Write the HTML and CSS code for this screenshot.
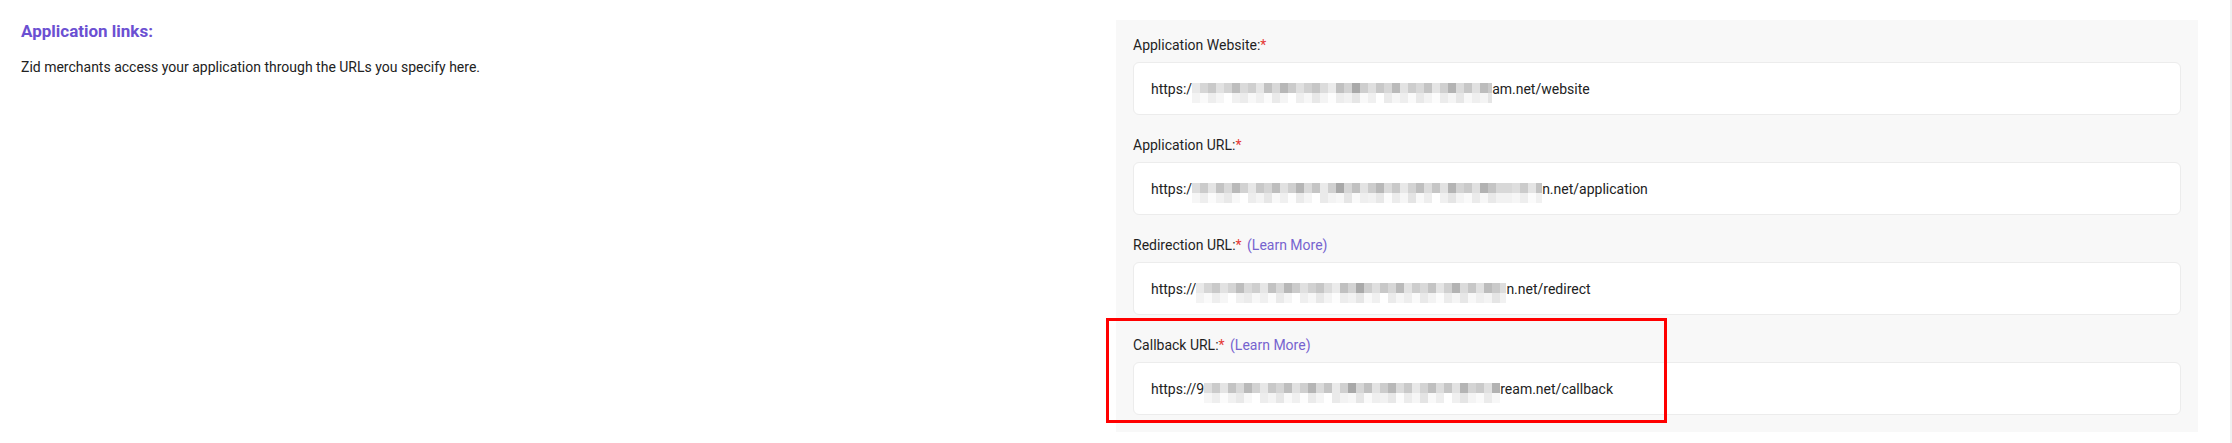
FILE: index.html
```html
<!DOCTYPE html>
<html lang="en">
<head>
    <meta charset="UTF-8">
    <meta name="viewport" content="width=device-width, initial-scale=1.0">
    <title>Application links</title>
    <link rel="stylesheet" href="styles.css">
</head>
<body>

    <div class="page">
        <!-- Section intro -->
        <div class="intro">
            <h2 class="section-title">Application links:</h2>
            <p class="section-desc">Zid merchants access your application through the URLs you specify here.</p>
        </div>

        <!-- URL fields -->
        <div class="panel">
            <div class="field">
                <label class="field-label">Application Website:<span class="req">*</span></label>
                <div class="field-input">https:/<span class="mosaic mosaic-a" style="width: 300px;"></span>am.net/website</div>
            </div>

            <div class="field">
                <label class="field-label">Application URL:<span class="req">*</span></label>
                <div class="field-input">https:/<span class="mosaic mosaic-b" style="width: 350px;"></span>n.net/application</div>
            </div>

            <div class="field">
                <label class="field-label">Redirection URL:<span class="req">*</span> <a href="#" class="learn-more">(Learn More)</a></label>
                <div class="field-input">https://<span class="mosaic mosaic-a" style="width: 310px;"></span>n.net/redirect</div>
            </div>

            <div class="field">
                <span class="highlight"></span>
                <label class="field-label">Callback URL:<span class="req">*</span> <a href="#" class="learn-more">(Learn More)</a></label>
                <div class="field-input">https://9<span class="mosaic mosaic-b" style="width: 296px;"></span>ream.net/callback</div>
            </div>
        </div>
    </div>

</body>
</html>
```

FILE: styles.css
```css
* {
    margin: 0;
    padding: 0;
    box-sizing: border-box;
}

body {
    font-family: Roboto, "Noto Sans", Arial, sans-serif;
    background-color: #ffffff;
    color: #1f1f1f;
}

.page {
    display: grid;
    grid-template-columns: 1fr 1082px;
    min-height: 443px;
    padding: 20px 32px 0 21px;
    border-right: 2px solid #f0f0f0;
}

.section-title {
    font-size: 17px;
    line-height: 22px;
    font-weight: 700;
    color: #6b50d2;
    margin-bottom: 15px;
}

.section-desc {
    font-size: 14px;
    line-height: 20px;
    color: #222222;
}

.panel {
    align-self: start;
    background-color: #f8f8f8;
    padding: 15px 17px 17px;
}

.field {
    position: relative;
    margin-bottom: 20px;
}

.field:last-child {
    margin-bottom: 0;
}

.field-label {
    display: block;
    font-size: 14px;
    line-height: 20px;
    color: #1f1f1f;
    margin-bottom: 7px;
}

.req {
    color: #e53935;
}

.learn-more {
    color: #7663cf;
    text-decoration: none;
    margin-left: 2px;
}

.field-input {
    display: flex;
    align-items: center;
    height: 53px;
    padding: 0 17px;
    background-color: #ffffff;
    border: 1px solid #ececec;
    border-radius: 6px;
    font-size: 14px;
    color: #222222;
    white-space: nowrap;
}

/* pixelated (blurred) part of the url */
.mosaic {
    display: inline-block;
    height: 20px;
    margin-top: 9px;
    flex-shrink: 0;
    background-repeat: repeat-x;
    background-size: 320px 10px, 320px 10px;
    background-position: left top, left bottom;
}

.mosaic-a {
    background-image:
        linear-gradient(90deg, #e9e9e9 0 8px, #d6d6d6 8px 16px, #c9c9c9 16px 24px, #e2e2e2 24px 32px, #d4d4d4 32px 40px, #bdbdbd 40px 48px, #dadada 48px 56px, #cfcfcf 56px 64px, #e6e6e6 64px 72px, #c2c2c2 72px 80px, #d8d8d8 80px 88px, #b7b7b7 88px 96px, #cbcbcb 96px 104px, #e0e0e0 104px 112px, #d1d1d1 112px 120px, #c6c6c6 120px 128px, #dcdcdc 128px 136px, #ebebeb 136px 144px, #c0c0c0 144px 152px, #d3d3d3 152px 160px, #a9a9a9 160px 168px, #cecece 168px 176px, #dfdfdf 176px 184px, #c8c8c8 184px 192px, #d7d7d7 192px 200px, #bababa 200px 208px, #e3e3e3 208px 216px, #cdcdcd 216px 224px, #d9d9d9 224px 232px, #c4c4c4 232px 240px, #e5e5e5 240px 248px, #d0d0d0 248px 256px, #b3b3b3 256px 264px, #dbdbdb 264px 272px, #c7c7c7 272px 280px, #e1e1e1 280px 288px, #bcbcbc 288px 296px, #cacaca 296px 304px, #dddddd 304px 320px),
        linear-gradient(90deg, #f3f3f3 0 8px, #fafafa 8px 16px, #eeeeee 16px 24px, #f6f6f6 24px 32px, #ffffff 32px 40px, #f1f1f1 40px 48px, #ececec 48px 56px, #f8f8f8 56px 64px, #f0f0f0 64px 72px, #fbfbfb 72px 80px, #eaeaea 80px 88px, #f5f5f5 88px 96px, #ffffff 96px 104px, #efefef 104px 112px, #f7f7f7 112px 120px, #e8e8e8 120px 128px, #f4f4f4 128px 136px, #fdfdfd 136px 144px, #ededed 144px 152px, #f2f2f2 152px 160px, #e6e6e6 160px 168px, #f9f9f9 168px 176px, #f0f0f0 176px 184px, #ffffff 184px 192px, #ebebeb 192px 200px, #f6f6f6 200px 208px, #eeeeee 208px 216px, #fafafa 216px 224px, #e9e9e9 224px 232px, #f3f3f3 232px 240px, #fcfcfc 240px 248px, #ececec 248px 256px, #f5f5f5 256px 264px, #e7e7e7 264px 272px, #f8f8f8 272px 280px, #efefef 280px 288px, #f4f4f4 288px 296px, #e5e5e5 296px 304px, #f1f1f1 304px 320px);
}

.mosaic-b {
    background-image:
        linear-gradient(90deg, #dedede 0 8px, #cbcbcb 8px 16px, #e4e4e4 16px 24px, #c3c3c3 24px 32px, #d9d9d9 32px 40px, #b9b9b9 40px 48px, #d2d2d2 48px 56px, #e7e7e7 56px 64px, #c8c8c8 64px 72px, #d5d5d5 72px 80px, #bebebe 80px 88px, #e1e1e1 88px 96px, #cfcfcf 96px 104px, #b5b5b5 104px 112px, #dadada 112px 120px, #c5c5c5 120px 128px, #eaeaea 128px 136px, #d0d0d0 136px 144px, #a8a8a8 144px 152px, #d6d6d6 152px 160px, #c1c1c1 160px 168px, #e3e3e3 168px 176px, #cccccc 176px 184px, #b8b8b8 184px 192px, #dbdbdb 192px 200px, #c9c9c9 200px 208px, #e8e8e8 208px 216px, #d3d3d3 216px 224px, #bfbfbf 224px 232px, #dddddd 232px 240px, #c6c6c6 240px 248px, #e2e2e2 248px 256px, #b4b4b4 256px 264px, #d4d4d4 264px 272px, #cacaca 272px 280px, #e0e0e0 280px 288px, #b2b2b2 288px 296px, #c4c4c4 296px 304px, #d8d8d8 304px 320px),
        linear-gradient(90deg, #f6f6f6 0 8px, #eeeeee 8px 16px, #fbfbfb 16px 24px, #f1f1f1 24px 32px, #e9e9e9 32px 40px, #f8f8f8 40px 48px, #ffffff 48px 56px, #ededed 56px 64px, #f4f4f4 64px 72px, #e7e7e7 72px 80px, #f9f9f9 80px 88px, #f0f0f0 88px 96px, #fdfdfd 96px 104px, #ebebeb 104px 112px, #f5f5f5 112px 120px, #ffffff 120px 128px, #eaeaea 128px 136px, #f3f3f3 136px 144px, #f7f7f7 144px 152px, #e6e6e6 152px 160px, #fafafa 160px 168px, #efefef 168px 176px, #f2f2f2 176px 184px, #e8e8e8 184px 192px, #fcfcfc 192px 200px, #ececec 200px 208px, #f6f6f6 208px 216px, #e4e4e4 216px 224px, #f9f9f9 224px 232px, #eeeeee 232px 240px, #ffffff 240px 248px, #f0f0f0 248px 256px, #e5e5e5 256px 264px, #f4f4f4 264px 272px, #fafafa 272px 280px, #ebebeb 280px 288px, #f7f7f7 288px 296px, #e9e9e9 296px 304px, #f2f2f2 304px 320px);
}

/* red annotation frame around the callback field */
.highlight {
    position: absolute;
    top: -17px;
    left: -27px;
    width: 561px;
    bottom: -8px;
    border: 3px solid #ff0000;
    pointer-events: none;
}
```
